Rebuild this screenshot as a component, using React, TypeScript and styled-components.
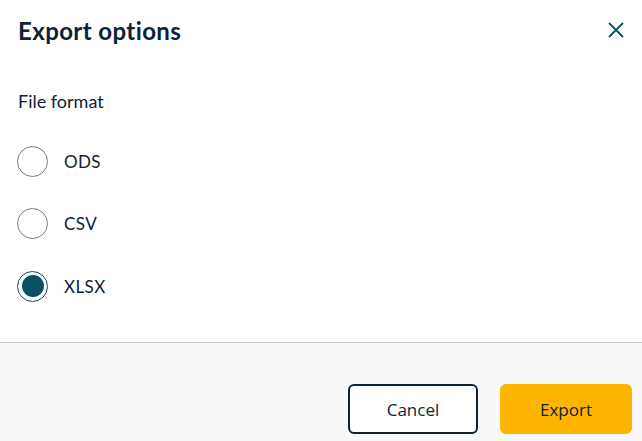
import React, { useState } from 'react';
import styled, { createGlobalStyle } from 'styled-components';

const GlobalStyle = createGlobalStyle`
  html, body {
    margin: 0;
    padding: 0;
    background: #ffffff;
  }
  body {
    font-family: Lato, "Open Sans", sans-serif;
    color: #0e2236;
  }
`;

const Dialog = styled.div`
  width: 642px;
  height: 441px;
  display: flex;
  flex-direction: column;
  background: #ffffff;
  overflow: hidden;
`;

const Header = styled.div`
  display: flex;
  align-items: center;
  justify-content: space-between;
  height: 60px;
  padding: 0 16px 0 18px;
`;

const Title = styled.h2`
  margin: 0;
  font-family: Lato, sans-serif;
  font-size: 24px;
  font-weight: 700;
  color: #0e2236;
  letter-spacing: 0.4px;
`;

const CloseButton = styled.button`
  width: 20px;
  height: 20px;
  padding: 0;
  border: none;
  background: transparent;
  display: flex;
  align-items: center;
  justify-content: center;
  cursor: pointer;
`;

const Body = styled.div`
  flex: 1;
  padding: 25px 18px 0 17px;
`;

const SectionLabel = styled.div`
  font-size: 18px;
  line-height: 32px;
  padding-left: 1px;
  color: #0e2236;
`;

const OptionList = styled.div`
  display: flex;
  flex-direction: column;
  gap: 30.5px;
  margin-top: 28px;
`;

const Option = styled.label`
  display: flex;
  align-items: center;
  height: 32px;
  cursor: pointer;
`;

const RadioCircle = styled.span<{ $checked: boolean }>`
  box-sizing: border-box;
  flex-shrink: 0;
  width: 31px;
  height: 31px;
  border-radius: 50%;
  border: ${p => (p.$checked ? '1.5px solid #0b5066' : '1px solid #7a7a7a')};
  display: flex;
  align-items: center;
  justify-content: center;
  background: #fff;

  &::after {
    content: '';
    width: 22px;
    height: 22px;
    border-radius: 50%;
    background: #0b5066;
    display: ${p => (p.$checked ? 'block' : 'none')};
  }
`;

const OptionText = styled.span`
  margin-left: 16px;
  font-size: 17px;
  color: #0e2236;
  letter-spacing: 0.4px;
`;

const Footer = styled.div`
  box-sizing: border-box;
  height: 99px;
  border-top: 1px solid #c8c8c8;
  background: #f8f8f8;
  display: flex;
  justify-content: flex-end;
  align-items: flex-end;
  gap: 22px;
  padding: 0 10px 7px 0;
`;

const Button = styled.button<{ $primary?: boolean }>`
  box-sizing: border-box;
  width: ${p => (p.$primary ? '132px' : '130px')};
  height: 50px;
  border-radius: 6px;
  border: ${p => (p.$primary ? 'none' : '2px solid #0d2137')};
  background: ${p => (p.$primary ? '#ffb400' : '#ffffff')};
  color: #0e2236;
  font-family: "Open Sans", sans-serif;
  font-size: 17px;
  cursor: pointer;
`;

const formats = ['ODS', 'CSV', 'XLSX'];

export default function App() {
  const [format, setFormat] = useState('XLSX');

  return (
    <>
      <GlobalStyle />
      <Dialog>
        <Header>
          <Title>Export options</Title>
          <CloseButton aria-label="Close">
            <svg width="16" height="16" viewBox="0 0 16 16">
              <path d="M1 1 L15 15 M15 1 L1 15" stroke="#0b5066" strokeWidth="1.8" fill="none" />
            </svg>
          </CloseButton>
        </Header>
        <Body>
          <SectionLabel>File format</SectionLabel>
          <OptionList>
            {formats.map(f => (
              <Option key={f} onClick={() => setFormat(f)}>
                <RadioCircle $checked={format === f} />
                <OptionText>{f}</OptionText>
              </Option>
            ))}
          </OptionList>
        </Body>
        <Footer>
          <Button>Cancel</Button>
          <Button $primary>Export</Button>
        </Footer>
      </Dialog>
    </>
  );
}
